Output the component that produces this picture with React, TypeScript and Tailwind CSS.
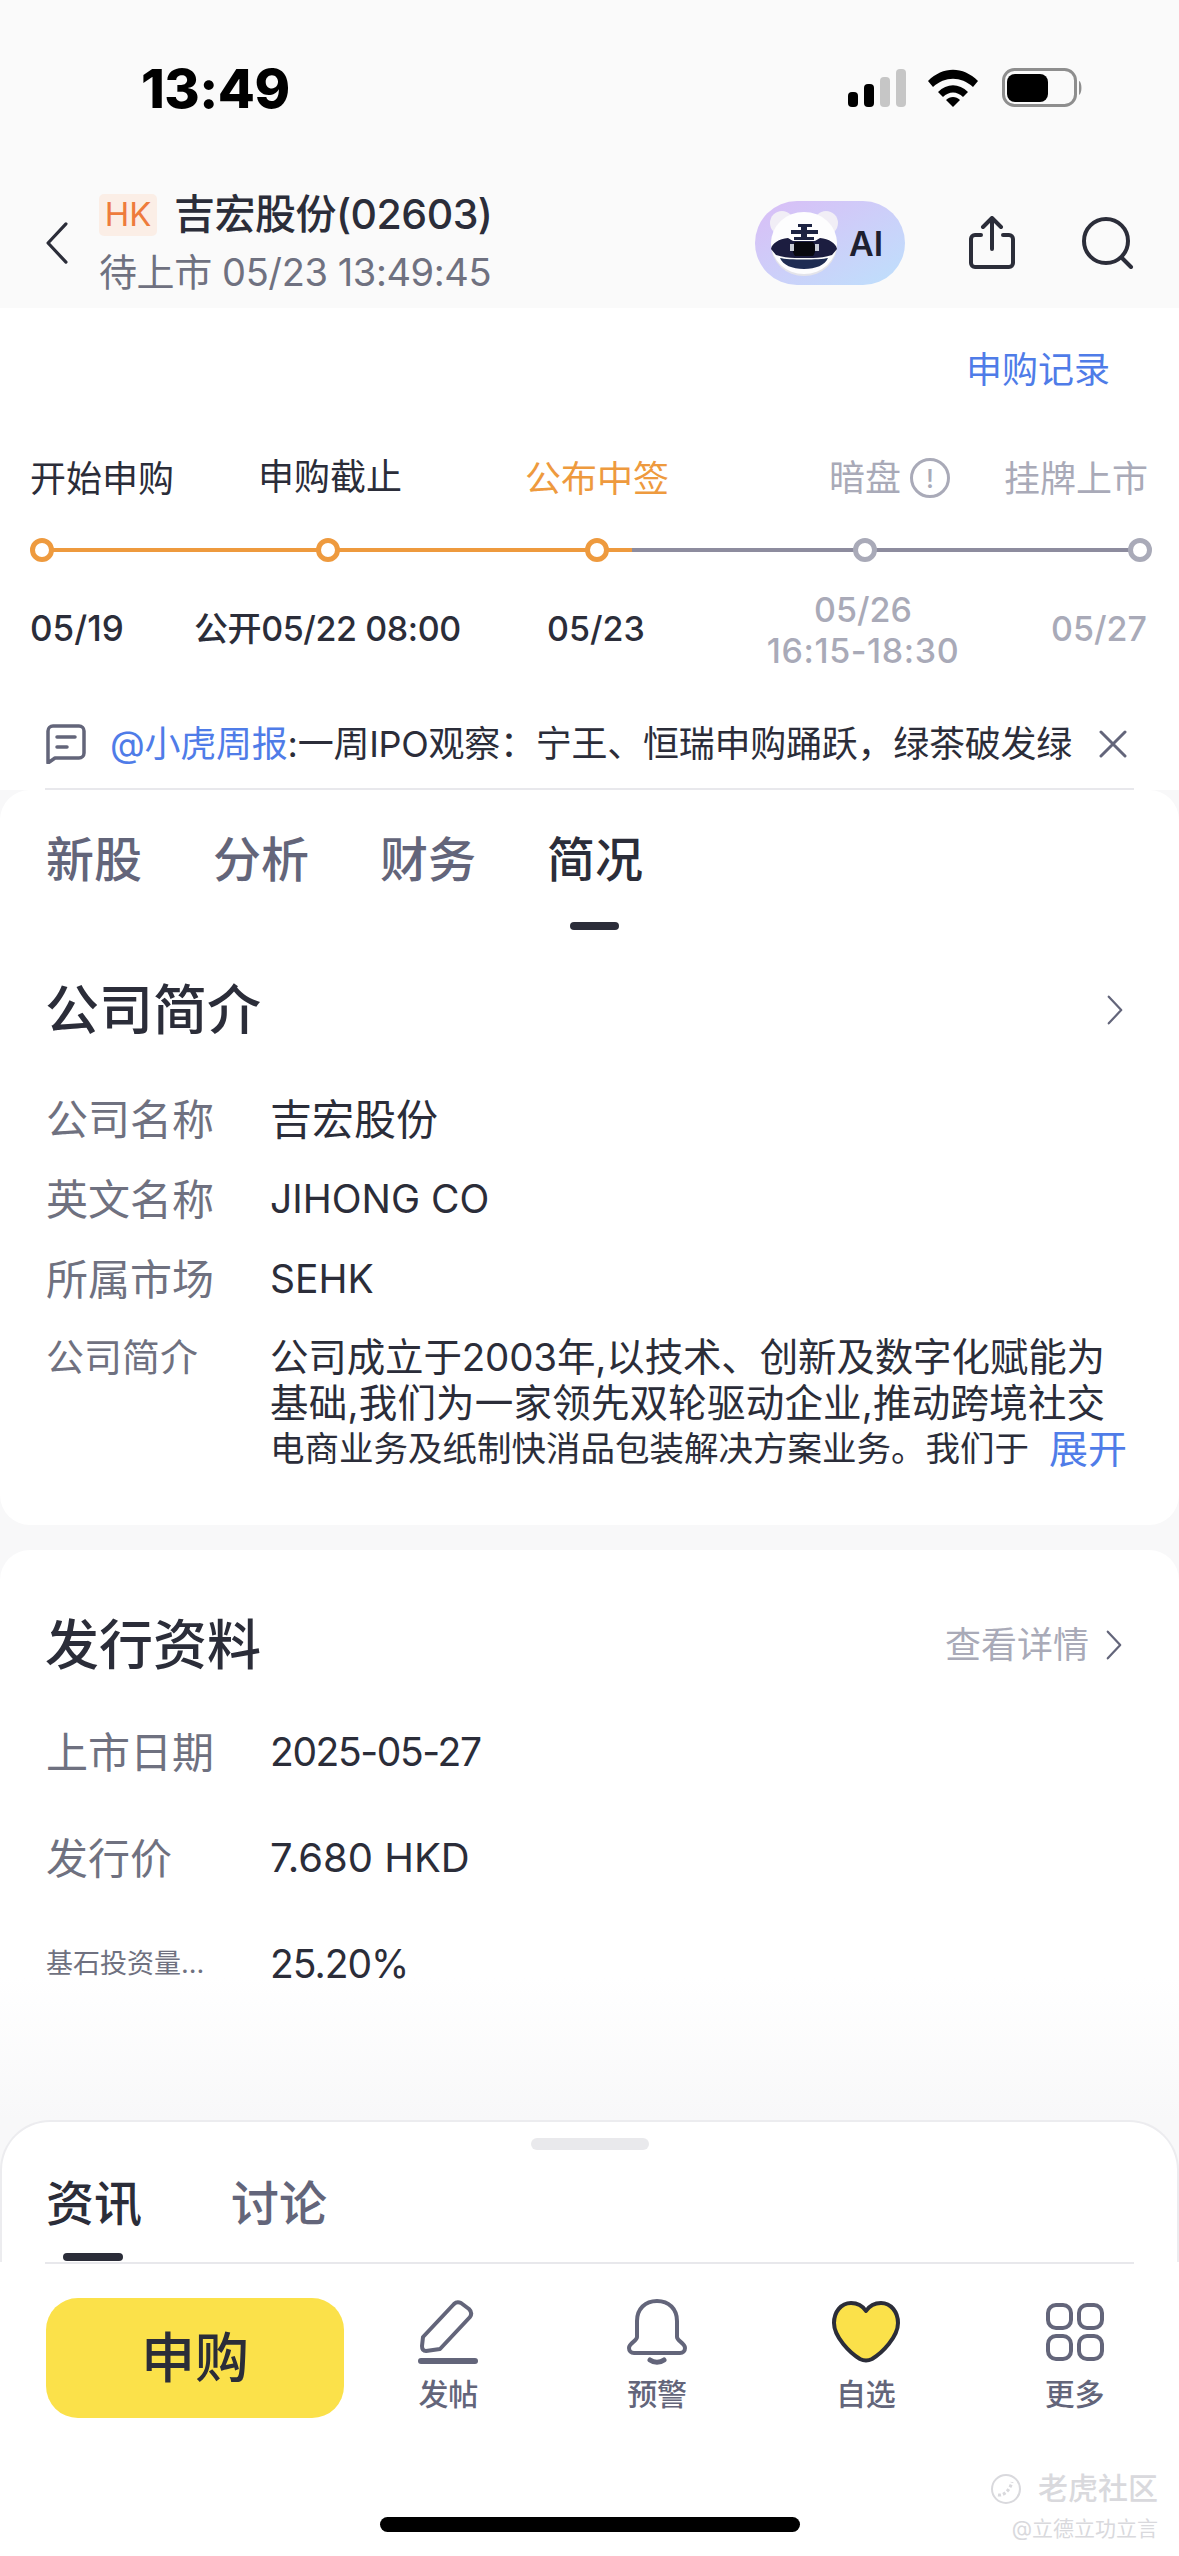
import React from 'react';

const FONT = 'font-["Inter","Noto_Sans_CJK_SC",sans-serif]';

const Chevron: React.FC<{ className?: string; left?: boolean }> = ({ className, left }) => (
  <svg viewBox="0 0 20 36" className={className} fill="none" stroke="currentColor" strokeWidth="2.500" strokeLinecap="round" strokeLinejoin="round">
    <path d={left ? 'M17 3L3 18l14 15' : 'M3 3l14 15L3 33'} />
  </svg>
);

const StatusIcons = () => (
  <svg width="240" height="40" viewBox="0 0 240 40" className="shrink-0">
    <rect x="6" y="24" width="10" height="15" rx="4" fill="#000" />
    <rect x="22" y="16" width="10" height="23" rx="4" fill="#000" />
    <rect x="38" y="9" width="10" height="30" rx="4" fill="#c6c6c6" />
    <rect x="54" y="1" width="10" height="38" rx="4" fill="#c6c6c6" />
    <path d="M86 13c15-15 35-15 50 0l-5 6c-12-11-28-11-40 0z" fill="#000" />
    <path d="M96 24c9-9 21-9 30 0l-5 5c-6-6-14-6-20 0z" fill="#000" />
    <path d="M104 32c4-4 10-4 14 0l-7 7z" fill="#000" />
    <rect x="161.5" y="1.5" width="72" height="36" rx="11" fill="none" stroke="#8e8e8e" strokeWidth="3" />
    <rect x="165" y="6" width="41" height="28" rx="8" fill="#000" />
    <path d="M237 13c3 1 3.500 12 0 14z" fill="#8e8e8e" />
  </svg>
);

const AiLogo = () => (
  <svg width="74" height="68" viewBox="0 0 74 68">
    <circle cx="15" cy="14" r="12" fill="#f1eef6" />
    <circle cx="59" cy="14" r="12" fill="#f1eef6" />
    <ellipse cx="37" cy="36" rx="33" ry="31" fill="#e4e4ea" />
    <ellipse cx="37" cy="34" rx="33" ry="31" fill="#fdfdfe" />
    <path d="M31 15h14v3h-5v3h11v4H40v3h7v3H27v-3h7v-3H24v-4h10v-3h-3z" fill="#1c2342" />
    <path d="M4 40c1-6 8-10 17-11l5 3h22l5-3c9 1 16 5 17 11l-5 6c-6 2-13 3-19 3H28c-6 0-13-1-19-3z" fill="#1c1d40" />
    <path d="M28 33h18c3 4 3 10 0 14H28c-3-4-3-10 0-14z" fill="#08080f" />
    <rect x="23" y="35" width="4" height="7" fill="#c9ccd6" />
    <rect x="48" y="35" width="4" height="7" fill="#c9ccd6" />
    <path d="M13 49c8 2 40 2 48 0-3 7-12 11-24 11S16 56 13 49z" fill="#1e2c52" />
  </svg>
);

const ShareIcon = () => (
  <svg width="48" height="54" viewBox="0 0 48 54" fill="none" stroke="#2b2d39" strokeWidth="4" strokeLinecap="round" strokeLinejoin="round">
    <path d="M24 33V3M15 11l9-9 9 9" />
    <path d="M13 19H7a4 4 0 0 0-4 4v24a4 4 0 0 0 4 4h34a4 4 0 0 0 4-4V23a4 4 0 0 0-4-4h-6" />
  </svg>
);

const SearchIcon = () => (
  <svg width="52" height="52" viewBox="0 0 52 52" fill="none" stroke="#2b2d39" strokeWidth="4" strokeLinecap="round">
    <circle cx="24" cy="24" r="22" />
    <path d="M40 41l9 9" />
  </svg>
);

const TimelineTrack = () => (
  <svg width="1179" height="30" viewBox="0 0 1179 30" className="block">
    <path d="M42 15H632" stroke="#ee9a3e" strokeWidth="4" />
    <path d="M632 15H1140" stroke="#8d8c9e" strokeWidth="4" />
    <circle cx="42" cy="15" r="9.500" fill="#fff" stroke="#ee9a3e" strokeWidth="5" />
    <circle cx="328" cy="15" r="9.500" fill="#fff" stroke="#ee9a3e" strokeWidth="5" />
    <circle cx="597" cy="15" r="9.500" fill="#fff" stroke="#ee9a3e" strokeWidth="5" />
    <circle cx="865" cy="15" r="9.500" fill="#fff" stroke="#a9aab8" strokeWidth="5" />
    <circle cx="1140" cy="15" r="9.500" fill="#fff" stroke="#a9aab8" strokeWidth="5" />
  </svg>
);

const InfoRow: React.FC<{ label: string; value: string; valueClass?: string }> = ({ label, value, valueClass = 'text-[39px]' }) => (
  <div className="flex h-[60px] items-center">
    <div className="w-[224px] shrink-0 text-[42px] text-[#6f7180]">{label}</div>
    <div className={`text-[#2b2d39] ${valueClass}`}>{value}</div>
  </div>
);

const IssueRow: React.FC<{ label: string; value: string; valueClass: string; small?: boolean }> = ({ label, value, valueClass, small }) => (
  <div className="flex h-[60px] items-center">
    <div className={`w-[224px] shrink-0 text-[#6f7180] ${small ? 'text-[27px]' : 'text-[42px]'}`}>{label}</div>
    <div className={`text-[#2b2d39] ${valueClass}`}>{value}</div>
  </div>
);

const BarItem: React.FC<{ label: string; children: React.ReactNode }> = ({ label, children }) => (
  <div className="flex flex-1 flex-col items-center">
    <div className="flex h-[68px] items-center justify-center">{children}</div>
    <div className="mt-[8px] text-[30px] font-medium leading-[40px] text-[#63657a]">{label}</div>
  </div>
);

export default function App() {
  return (
    <div className={`${FONT} relative flex h-[2556px] w-[1179px] flex-col overflow-hidden bg-white`}>
      <header className="h-[308px] shrink-0 bg-[#fafafa]">
        <div className="flex h-[176px] items-center justify-between pl-[141px] pr-[97px]">
          <span className="text-[54px] font-extrabold tracking-[-0.5px] text-black">13:49</span>
          <StatusIcons />
        </div>
        <div className="flex h-[132px] items-start pl-[42px]">
          <Chevron left className="mt-[44px] h-[46px] w-[30px] text-[#2b2d39]" />
          <div className="ml-[27px] mt-[9px] flex flex-col">
            <div className="flex h-[60px] items-center">
              <span className="flex h-[42px] w-[58px] items-center justify-center rounded-[5px] bg-[#fbeee6] text-[33px] text-[#ee7b3c]">HK</span>
              <span className="ml-[17px] text-[41px] font-medium tracking-[-0.5px] text-[#2b2d39]">吉宏股份(02603)</span>
            </div>
            <div className="mt-[2px] text-[38px] leading-[50px] tracking-[-0.4px] text-[#6f7180]">待上市 05/23 13:49:45</div>
          </div>
          <div className="ml-auto mt-[25px] flex items-center pr-[45px]">
            <div className="flex h-[84px] w-[150px] items-center rounded-full bg-linear-to-br from-[#d9bdf6] to-[#bde0fc] pl-[12px]">
              <AiLogo />
              <span className="ml-[8px] text-[34px] font-semibold text-[#1e2030]">AI</span>
            </div>
            <div className="ml-[63px]"><ShareIcon /></div>
            <div className="ml-[66px]"><SearchIcon /></div>
          </div>
        </div>
      </header>

      <section className="shrink-0">
        <div className="mt-[37px] flex h-[50px] items-center justify-end pr-[69px] text-[36px] text-[#4f7ce8]">申购记录</div>
        <div className="mt-[57px] grid h-[50px] grid-cols-[228px_267px_304px_175px_1fr] items-center pl-[30px] text-[36px]">
          <span className="text-[#2b2d39]">开始申购</span>
          <span className="-mt-[5px] text-[#2b2d39]">申购截止</span>
          <span className="text-[#ee9a3e]">公布中签</span>
          <span className="-mt-[2px] flex items-center text-[#a9aab8]">
            暗盘
            <span className="ml-[9px] flex h-[40px] w-[40px] items-center justify-center rounded-full border-[3px] border-[#a9aab8] text-[26px] font-medium">!</span>
          </span>
          <span className="text-[#a9aab8]">挂牌上市</span>
        </div>
        <div className="mt-[33px]"><TimelineTrack /></div>
        <div className="mt-[18px] grid h-[90px] grid-cols-[164px_353px_219px_285px_1fr] items-center pl-[30px] text-[35px] font-medium text-[#2b2d39]">
          <span>05/19</span>
          <span className="text-[34px] tracking-[-0.4px]">公开05/22 08:00</span>
          <span className="text-[34px]">05/23</span>
          <span className="mt-[3px] w-[194px] text-center text-[34px] leading-[41px] text-[#a9aab8]">05/26<br /><span className="tracking-[0.6px]">16:15-18:30</span></span>
          <span className="text-[34px] text-[#a9aab8]">05/27</span>
        </div>
        <div className="mt-[41px] flex h-[60px] items-center pl-[46px]">
          <svg width="40" height="40" viewBox="0 0 40 40" fill="none" stroke="#63657a" strokeWidth="3.500" strokeLinecap="round" strokeLinejoin="round" className="shrink-0">
            <path d="M2 7a5 5 0 0 1 5-5h26a5 5 0 0 1 5 5v22a5 5 0 0 1-5 5H9l-7 5z" />
            <path d="M11 13h18M11 23h10" />
          </svg>
          <span className="ml-[24px] whitespace-nowrap text-[36px] tracking-[-0.25px] text-[#2b2d39]"><span className="text-[#4f7ce8]">@小虎周报</span>:一周IPO观察：宁王、恒瑞申购踊跃，绿茶破发绿</span>
          <svg width="28" height="28" viewBox="0 0 28 28" stroke="#63657a" strokeWidth="3" strokeLinecap="round" className="ml-auto mr-[52px] shrink-0">
            <path d="M2 2l24 24M26 2L2 26" />
          </svg>
        </div>
        <div className="mx-[45px] mt-[14px] h-[2px] bg-[#e8e8ec]" />
      </section>

      <main className="flex min-h-0 flex-1 flex-col bg-[#f8f8f9]">
        <section className="h-[735px] shrink-0 rounded-[30px] bg-white px-[46px] pt-[40px]">
          <div className="flex h-[60px] items-center gap-[71px] text-[48px] font-medium text-[#63657a]">
            <span>新股</span>
            <span>分析</span>
            <span>财务</span>
            <span className="relative text-[#2b2d39]">简况
              <span className="absolute left-[23px] top-[98px] h-[8px] w-[49px] rounded-full bg-[#2b2d39]" />
            </span>
          </div>
          <div className="mt-[90px] flex h-[60px] items-center justify-between">
            <h2 className="-ml-[1px] text-[54px] font-medium text-[#2b2d39]">公司简介</h2>
            <Chevron className="mr-[8px] h-[32px] w-[20px] text-[#63657a]" />
          </div>
          <div className="mt-[49px] flex flex-col gap-[20px]">
            <InfoRow label="公司名称" value="吉宏股份" valueClass="text-[42px]" />
            <InfoRow label="英文名称" value="JIHONG CO" />
            <InfoRow label="所属市场" value="SEHK" />
          </div>
          <div className="mt-[25px] flex">
            <div className="w-[224px] shrink-0 text-[38px] leading-[46px] text-[#6f7180]">公司简介</div>
            <div className="text-[#2b2d39]">
              <div className="whitespace-nowrap text-[38.5px] leading-[46px] tracking-[-0.15px]">公司成立于2003年,以技术、创新及数字化赋能为</div>
              <div className="whitespace-nowrap text-[38.5px] leading-[46px] tracking-[0.2px]">基础,我们为一家领先双轮驱动企业,推动跨境社交</div>
              <div className="flex h-[46px] items-center whitespace-nowrap text-[34.5px]">电商业务及纸制快消品包装解决方案业务。我们于
                <span className="ml-[20px] text-[39px] text-[#4f7ce8]">展开</span>
              </div>
            </div>
          </div>
        </section>

        <section className="mt-[25px] h-[570px] shrink-0 rounded-t-[30px] bg-linear-to-b from-white from-75% to-[#f8f8f9] px-[46px] pt-[65px]">
          <div className="flex h-[60px] items-center justify-between">
            <h2 className="-ml-[1px] text-[54px] font-medium text-[#2b2d39]">发行资料</h2>
            <div className="flex items-center pr-[8px] text-[36px] text-[#a9aab8]">
              查看详情
              <Chevron className="ml-[14px] h-[32px] w-[22px] text-[#63657a]" />
            </div>
          </div>
          <div className="mt-[47px] flex flex-col gap-[46px]">
            <IssueRow label="上市日期" value="2025-05-27" valueClass="text-[39px] tracking-[-1.4px]" />
            <IssueRow label="发行价" value="7.680 HKD" valueClass="text-[40px]" />
            <IssueRow label="基石投资量..." value="25.20%" valueClass="text-[39px] tracking-[-1px]" small />
          </div>
        </section>

        <section className="h-[142px] shrink-0 rounded-t-[50px] border-x-2 border-t-2 border-[#ececef] bg-white px-[44px]">
          <div className="mx-auto mt-[16px] h-[12px] w-[118px] rounded-full bg-[#e9e9ec]" />
          <div className="mt-[24px] flex h-[60px] items-center gap-[89px] text-[48px] font-medium text-[#63657a]">
            <span className="relative text-[#2b2d39]">资讯
              <span className="absolute left-[17px] top-[85px] h-[8px] w-[60px] rounded-full bg-[#2b2d39]" />
            </span>
            <span>讨论</span>
          </div>
        </section>

        <nav className="h-[294px] shrink-0 bg-white">
          <div className="mx-[45px] h-[2px] bg-[#e8e8ec]" />
          <div className="flex pl-[46px] pt-[34px]">
            <button className="flex h-[120px] w-[298px] shrink-0 items-center justify-center rounded-[32px] bg-[#fbe14a] text-[54px] font-medium text-[#2b2d39]">申购</button>
            <BarItem label="发帖">
              <svg width="60" height="64" viewBox="0 0 60 64" fill="none" stroke="#63657a" strokeWidth="4" strokeLinecap="round" strokeLinejoin="round">
                <path d="M4 46l1-9L36 4c2-2 5-2 7-1l8 6c2 2 3 5 1 8L22 49l-14 2c-3 0-4-2-4-5z" />
                <path d="M3 61h54" strokeWidth="6" />
              </svg>
            </BarItem>
            <BarItem label="预警">
              <svg width="60" height="66" viewBox="0 0 60 66" fill="none" stroke="#63657a" strokeWidth="4" strokeLinecap="round" strokeLinejoin="round">
                <path d="M10 38V22C10 10 18 2 30 2s20 8 20 20v16c0 4 8 6 8 11 0 3-2 5-5 5H7c-3 0-5-2-5-5 0-5 8-7 8-11z" />
                <path d="M23 61c4 3 10 3 14 0" strokeWidth="5" />
              </svg>
            </BarItem>
            <BarItem label="自选">
              <svg width="68" height="62" viewBox="0 0 68 62" stroke="#2b2d39" strokeWidth="4" strokeLinejoin="round">
                <path d="M34 10C30 4 24 2 19 2 9 2 2 11 2 22c0 14 16 30 26 36 4 2 8 2 12 0 10-6 26-22 26-36C66 11 59 2 49 2c-5 0-11 2-15 8z" fill="#fbe14a" />
              </svg>
            </BarItem>
            <BarItem label="更多">
              <svg width="58" height="58" viewBox="0 0 58 58" fill="none" stroke="#63657a" strokeWidth="4">
                <rect x="2" y="2" width="23" height="23" rx="8" />
                <rect x="33" y="2" width="23" height="23" rx="8" />
                <rect x="2" y="33" width="23" height="23" rx="8" />
                <rect x="33" y="33" width="23" height="23" rx="8" />
              </svg>
            </BarItem>
          </div>
        </nav>
      </main>

      <div className="absolute bottom-[24px] left-[380px] h-[15px] w-[420px] rounded-full bg-black" />

      {/* watermark */}
      <div className="absolute right-[21px] top-[2466px] flex flex-col items-end text-[#d9d9dd]">
        <div className="flex items-center">
          <svg width="32" height="34" viewBox="0 0 32 34" fill="none" stroke="#d9d9dd" strokeWidth="2">
            <circle cx="16" cy="17" r="14" />
            <path d="M8 23c6 1 12-5 14-13" strokeWidth="3" strokeDasharray="3 2" />
          </svg>
          <span className="ml-[16px] text-[30px] font-medium">老虎社区</span>
        </div>
        <span className="mt-[3px] text-[21px] leading-[30px]">@立德立功立言</span>
      </div>
    </div>
  );
}
